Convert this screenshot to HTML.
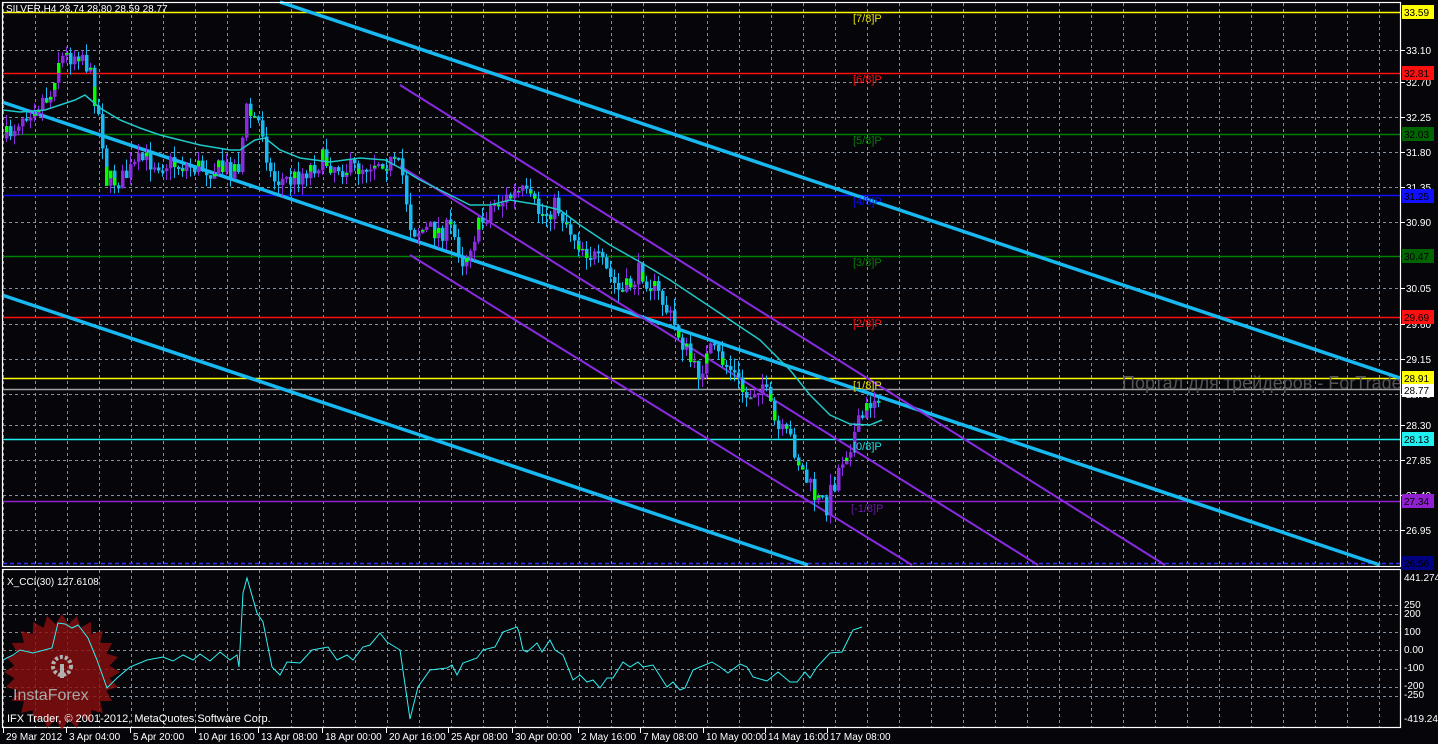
<!DOCTYPE html>
<html><head><meta charset="utf-8"><style>
html,body{margin:0;padding:0;background:#05050a;}
body{width:1438px;height:744px;overflow:hidden;position:relative;font-family:"Liberation Sans",sans-serif;}
svg{position:absolute;left:0;top:0}
</style></head><body>
<svg id="s" width="1438" height="744" xmlns="http://www.w3.org/2000/svg" font-family="Liberation Sans, sans-serif">
<rect width="1438" height="744" fill="#05050a"/>
<g id="grid" stroke="#8090a0" stroke-width="1" stroke-dasharray="3,3"></g>
<g stroke-width="1.5">
<line x1="3" y1="12.5" x2="1400" y2="12.5" stroke="#ffff00"/>
<line x1="3" y1="73.5" x2="1400" y2="73.5" stroke="#ff1010"/>
<line x1="3" y1="134.5" x2="1400" y2="134.5" stroke="#008000"/>
<line x1="3" y1="195.5" x2="1400" y2="195.5" stroke="#1010ff"/>
<line x1="3" y1="256.5" x2="1400" y2="256.5" stroke="#008000"/>
<line x1="3" y1="317.5" x2="1400" y2="317.5" stroke="#ff1010"/>
<line x1="3" y1="378.5" x2="1400" y2="378.5" stroke="#ffff00"/>
<line x1="3" y1="389.5" x2="1400" y2="389.5" stroke="#a0a0a0"/>
<line x1="3" y1="439.5" x2="1400" y2="439.5" stroke="#20f0f0"/>
<line x1="3" y1="501.5" x2="1400" y2="501.5" stroke="#9020d0"/>
<line x1="3" y1="563.5" x2="1400" y2="563.5" stroke="#3030ff" stroke-dasharray="4,3"/>
</g>
<text x="1122" y="389" font-size="18" fill="#555">Портал для трейдеров - ForTrader.ru</text>
<g stroke="#18b8f0" stroke-width="3.5">
<line x1="280" y1="2" x2="1400" y2="378"/>
<line x1="2" y1="102" x2="1380" y2="565"/>
<line x1="2" y1="295" x2="808" y2="565"/>
</g>
<g stroke="#8a2be2" stroke-width="2">
<line x1="400" y1="85" x2="1165" y2="565"/>
<line x1="400" y1="166" x2="1038" y2="565"/>
<line x1="410" y1="255" x2="912" y2="565"/>
</g>
<g id="candles"></g>
<polyline id="ma" fill="none" stroke="#20c8c8" stroke-width="1.5" points="3,110 20,112 45,110 60,105 75,100 85,95 100,108 120,120 140,128 160,135 200,145 230,150 240,150 255,140 265,138 280,150 300,158 330,162 360,158 385,160 400,168 420,180 450,195 470,205 490,205 510,200 540,205 560,210 580,225 610,245 640,262 670,280 700,300 730,320 760,340 790,370 810,395 830,415 850,424 870,425 882,420"/>
<g font-size="11">
<text x="853" y="22" fill="#e0e000">[7/8]P</text>
<text x="853" y="83" fill="#ff1010">[6/8]P</text>
<text x="853" y="144" fill="#008000">[5/8]P</text>
<text x="853" y="205" fill="#1010ff">[4/8]P</text>
<text x="853" y="266" fill="#008000">[3/8]P</text>
<text x="853" y="327" fill="#ff1010">[2/8]P</text>
<text x="853" y="389" fill="#e0e000">[1/8]P</text>
<text x="853" y="450" fill="#20e0e0">[0/8]P</text>
<text x="851" y="512" fill="#6a1aa0">[-1/8]P</text>
</g>
<text x="6" y="12" font-size="10" fill="#fff">SILVER,H4  28.74 28.80 28.59 28.77</text>
<g stroke="#fff" stroke-width="1.2" fill="none">
<rect x="2.5" y="2.5" width="1398" height="564"/>
<rect x="2.5" y="569.5" width="1398" height="158"/>
</g>
<g id="axis" font-size="10" fill="#fff"></g>
<g font-size="10">
<rect x="1402" y="5" width="32" height="14" fill="#ffff00"/><text x="1404" y="16" fill="#000">33.59</text>
<rect x="1402" y="66" width="32" height="14" fill="#ff1010"/><text x="1404" y="77" fill="#000">32.81</text>
<rect x="1402" y="127" width="32" height="14" fill="#006400"/><text x="1404" y="138" fill="#000">32.03</text>
<rect x="1402" y="189" width="32" height="14" fill="#1010ff"/><text x="1404" y="200" fill="#000">31.25</text>
<rect x="1402" y="249" width="32" height="14" fill="#006400"/><text x="1404" y="260" fill="#000">30.47</text>
<rect x="1402" y="310" width="32" height="14" fill="#ff1010"/><text x="1404" y="321" fill="#000">29.69</text>
<rect x="1402" y="371" width="32" height="14" fill="#ffff00"/><text x="1404" y="382" fill="#000">28.91</text>
<rect x="1402" y="384" width="32" height="13" fill="#fff"/><text x="1404" y="394" fill="#000">28.77</text>
<rect x="1402" y="432" width="32" height="14" fill="#20f0f0"/><text x="1404" y="443" fill="#000">28.13</text>
<rect x="1402" y="494" width="32" height="14" fill="#9020d0"/><text x="1404" y="505" fill="#000">27.34</text>
<rect x="1402" y="556" width="32" height="14" fill="#000080"/><text x="1404" y="567" fill="#000">26.56</text>
</g>
<g font-size="10" fill="#fff">
<text x="1404" y="581">441.274</text>
<text x="1404" y="608">250</text>
<text x="1404" y="617">200</text>
<text x="1404" y="635">100</text>
<text x="1404" y="653">0.00</text>
<text x="1404" y="671">-100</text>
<text x="1404" y="689">-200</text>
<text x="1404" y="698">-250</text>
<text x="1404" y="722">-419.246</text>
</g>
<g opacity="0.8">
<polygon id="star" fill="#8a0e0e"/>
<text x="13" y="700" font-size="16" fill="#d0d0d0">InstaForex</text>
<circle cx="62" cy="666" r="9" fill="none" stroke="#ddd" stroke-width="4" stroke-dasharray="3,2"/>
<rect x="60" y="664" width="4" height="14" fill="#ddd"/>
</g>
<text x="7" y="585" font-size="10" fill="#fff">X_CCI(30) 127.6108</text>
<polyline fill="none" stroke="#30f0f0" stroke-width="1" points="3,660 13,655 20,650 33,653 52,648 58,623 65,624 72,628 78,625 82,630 88,638 97,660 107,688 117,678 130,667 147,660 163,657 173,661 183,655 193,660 200,654 210,661 220,652 230,660 237,655 239,667 243,593 247,578 257,613 263,622 272,667 280,675 287,662 300,663 312,650 328,647 337,660 347,655 353,660 363,647 370,645 380,633 387,642 400,650 410,719 418,687 430,670 447,668 452,665 457,675 463,663 477,658 483,650 495,647 503,632 517,627 519,632 523,650 527,652 537,643 542,652 550,640 555,650 563,655 573,680 580,675 587,682 593,680 600,688 607,678 613,678 623,662 630,667 638,662 643,667 653,665 667,687 673,682 680,690 685,688 693,670 700,667 712,662 720,667 728,673 740,664 747,667 753,677 767,681 778,672 790,682 797,682 805,672 810,678 817,667 830,653 842,652 853,630 862,627"/>
<text x="7" y="722" font-size="11" fill="#fff">IFX Trader, © 2001-2012, MetaQuotes Software Corp.</text>
<g id="time" font-size="10" fill="#fff"></g>
</svg>
<script>
(function(){
var NS="http://www.w3.org/2000/svg";
function el(p,t,a){var e=document.createElementNS(NS,t);for(var k in a)e.setAttribute(k,a[k]);p.appendChild(e);return e;}
var g=document.getElementById('grid');
for(var x=3;x<1400;x+=32){el(g,'line',{x1:x+.5,y1:3,x2:x+.5,y2:566});el(g,'line',{x1:x+.5,y1:570,x2:x+.5,y2:727});}
var ax=document.getElementById('axis');
var labs=["33.10","32.70","32.25","31.80","31.35","30.90","30.05","29.60","29.15","28.70","28.30","27.85","27.40","26.95"];
var ys=[50,82,117,152,187,222,288,324,359,394,425,460,495,530];
for(var i=0;i<ys.length;i++){el(g,'line',{x1:3,y1:ys[i]+.5,x2:1400,y2:ys[i]+.5});
 var t=el(ax,'text',{x:1406,y:ys[i]+4});t.textContent=labs[i];el(ax,'line',{x1:1401,y1:ys[i]+.5,x2:1405,y2:ys[i]+.5,stroke:'#fff'});}
[605,614,632,650,669,687,696].forEach(function(y){el(g,'line',{x1:3,y1:y+.5,x2:1400,y2:y+.5});});
var kp=[[3,140],[20,115],[40,100],[50,95],[55,60],[70,55],[80,50],[90,80],[100,130],[105,180],[120,180],[140,160],[180,165],[220,170],[238,165],[244,110],[260,125],[270,180],[290,180],[320,160],[350,170],[380,158],[400,170],[410,230],[420,230],[450,230],[462,262],[470,240],[490,205],[520,192],[540,215],[555,205],[575,240],[600,265],[620,295],[640,270],[660,300],[680,340],[695,375],[710,350],[730,370],[745,398],[760,380],[775,430],[790,440],[800,470],[815,500],[825,505],[840,460],[850,440],[860,420],[870,400],[878,392],[900,392]];
function f(x){for(var i=1;i<kp.length;i++)if(x<=kp[i][0]){var a=kp[i-1],b=kp[i];return a[1]+(b[1]-a[1])*(x-a[0])/(b[0]-a[0]);}return kp[kp.length-1][1];}
var seed=7;function r(){seed=(seed*16807)%2147483647;return seed/2147483647;}
var cg=document.getElementById('candles');var prev=f(4);
for(var x=5;x<=878;x+=4){var c=f(x)+(r()-.5)*22;var o=prev;prev=c;
 var tp=Math.min(o,c),bt=Math.max(o,c);if(bt-tp<2)bt=tp+2;
 var hi=tp-r()*12,lo=bt+r()*12;var up=c<o;var col=up?'#8a2be2':'#18b8f0';
 el(cg,'line',{x1:x+1.5,y1:hi,x2:x+1.5,y2:lo,stroke:col,'stroke-width':1});
 el(cg,'rect',{x:x,y:tp,width:3.5,height:bt-tp,fill:col});
 if(r()<.35){var h=(bt-tp)*.5;el(cg,'rect',{x:x,y:up?tp:bt-h,width:3.5,height:h,fill:'#00ff00'});}}
var pts=[];for(var i=0;i<48;i++){var a=i*Math.PI/24,rr=i%2?48:58;pts.push((62+rr*Math.cos(a)).toFixed(1)+','+(672+rr*Math.sin(a)).toFixed(1));}
document.getElementById('star').setAttribute('points',pts.join(' '));
var tg=document.getElementById('time');
var T=[[3,"29 Mar 2012"],[66,"3 Apr 04:00"],[130,"5 Apr 20:00"],[195,"10 Apr 16:00"],[258,"13 Apr 08:00"],[322,"18 Apr 00:00"],[386,"20 Apr 16:00"],[448,"25 Apr 08:00"],[512,"30 Apr 00:00"],[578,"2 May 16:00"],[640,"7 May 08:00"],[703,"10 May 00:00"],[765,"14 May 16:00"],[827,"17 May 08:00"]];
T.forEach(function(p){var t=el(tg,'text',{x:p[0]+3,y:740});t.textContent=p[1];el(tg,'line',{x1:p[0]+.5,y1:728,x2:p[0]+.5,y2:733,stroke:'#fff'});});
})();
</script>
</body></html>
